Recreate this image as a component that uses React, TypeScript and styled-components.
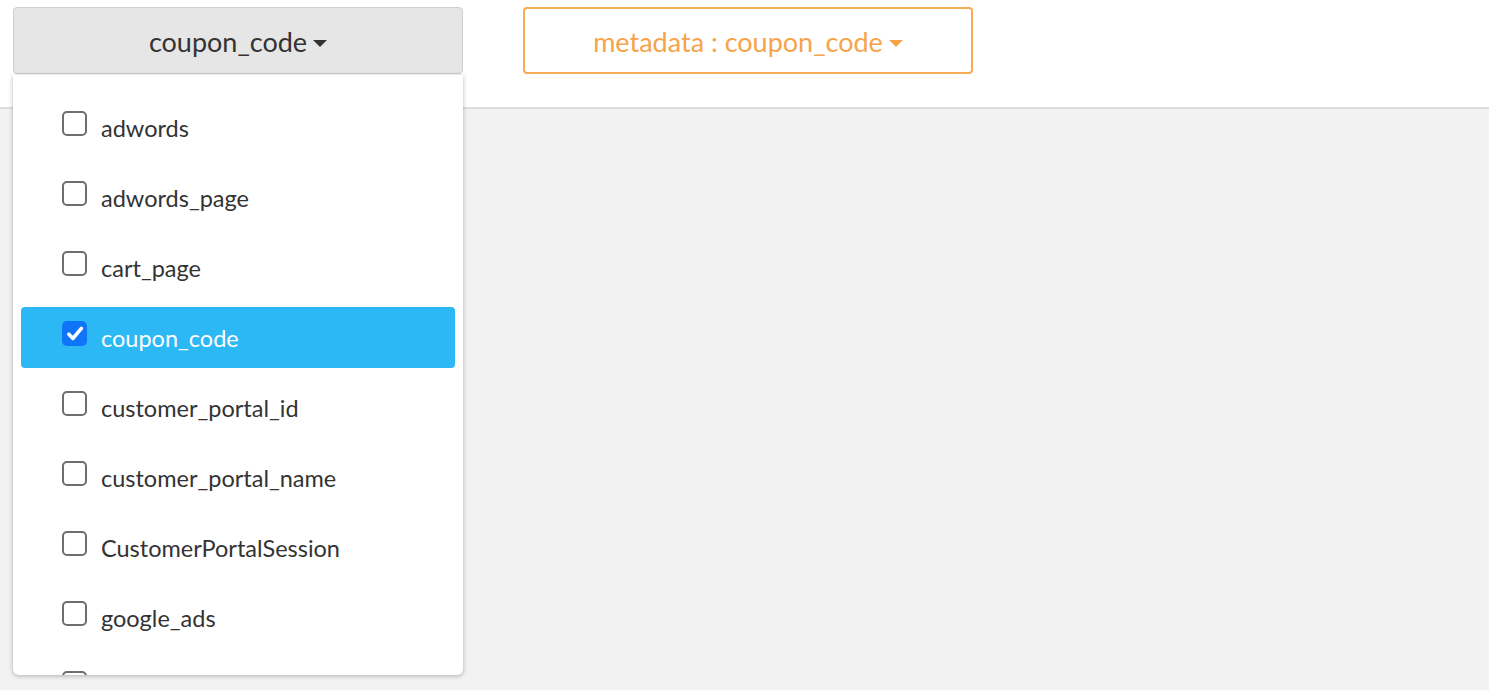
import React from "react";
import styled, { createGlobalStyle } from "styled-components";

const GlobalStyle = createGlobalStyle`
  html, body { margin: 0; padding: 0; background: #f2f2f2; }
  body { font-family: "Lato", "Noto Sans", sans-serif; }
  * { box-sizing: border-box; }
`;

const Page = styled.div`
  width: 1489px;
  height: 690px;
  background: #f2f2f2;
  overflow: hidden;
`;

const Header = styled.div`
  height: 109px;
  background: #ffffff;
  border-bottom: 2px solid #dddddd;
  padding: 7px 13px 0;
  display: flex;
  gap: 60px;
  align-items: flex-start;
`;

const DropdownWrap = styled.div`
  position: relative;
  width: 450px;
`;

const SelectButton = styled.button<{ $variant: "gray" | "orange" }>`
  width: 450px;
  height: 67px;
  border-radius: 4px;
  display: flex;
  align-items: center;
  justify-content: center;
  gap: 6px;
  font-family: "Lato", "Noto Sans", sans-serif;
  font-size: 27px;
  cursor: pointer;
  padding: 2px 0 0;
  background: ${(p) => (p.$variant === "gray" ? "#e6e6e6" : "#ffffff")};
  border: ${(p) => (p.$variant === "gray" ? "1px solid #cfcfcf" : "2px solid #f7ab55")};
  color: ${(p) => (p.$variant === "gray" ? "#333333" : "#f5a44b")};
`;

const Caret = styled.span`
  display: inline-block;
  width: 0;
  height: 0;
  border-left: 7px solid transparent;
  border-right: 7px solid transparent;
  border-top: 7px solid currentColor;
  margin-top: 3px;
`;

const Menu = styled.div`
  position: absolute;
  top: 68px;
  left: 0;
  width: 450px;
  height: 600px;
  background: #ffffff;
  border-radius: 0 0 6px 6px;
  box-shadow: 0 1px 5px rgba(0, 0, 0, 0.28);
  overflow: hidden;
  padding: 22px 8px 0;
  display: flex;
  flex-direction: column;
  gap: 9px;
  z-index: 2;
`;

const Row = styled.div<{ $selected?: boolean }>`
  flex: 0 0 61px;
  height: 61px;
  border-radius: 4px;
  display: flex;
  align-items: center;
  gap: 14px;
  padding-left: 41px;
  font-size: 23.5px;
  color: ${(p) => (p.$selected ? "#ffffff" : "#333333")};
  background: ${(p) => (p.$selected ? "#2cb7f5" : "transparent")};
`;

const Box = styled.span<{ $checked?: boolean }>`
  width: 25px;
  height: 25px;
  border-radius: 5px;
  margin-top: -8px;
  flex: 0 0 25px;
  display: flex;
  align-items: center;
  justify-content: center;
  background: ${(p) => (p.$checked ? "#0f74f7" : "#ffffff")};
  border: ${(p) => (p.$checked ? "none" : "2px solid #6e6e6e")};
`;

const Label = styled.span`
  line-height: 1;
  padding-top: 2px;
`;

const items = [
  "adwords",
  "adwords_page",
  "cart_page",
  "coupon_code",
  "customer_portal_id",
  "customer_portal_name",
  "CustomerPortalSession",
  "google_ads",
  "",
];

export default function App() {
  return (
    <Page>
      <GlobalStyle />
      <Header>
        <DropdownWrap>
          <SelectButton $variant="gray">
            coupon_code <Caret />
          </SelectButton>
          <Menu>
            {items.map((it, i) => {
              const sel = it === "coupon_code";
              return (
                <Row key={i} $selected={sel}>
                  <Box $checked={sel}>
                    {sel && (
                      <svg width="20" height="20" viewBox="0 0 20 20">
                        <path
                          d="M3.8 10.2 L8 14.4 L16.4 4.4"
                          fill="none"
                          stroke="#ffffff"
                          strokeWidth="3.6"
                          strokeLinecap="round"
                          strokeLinejoin="round"
                        />
                      </svg>
                    )}
                  </Box>
                  {it && <Label>{it}</Label>}
                </Row>
              );
            })}
          </Menu>
        </DropdownWrap>
        <SelectButton $variant="orange">
          metadata : coupon_code <Caret />
        </SelectButton>
      </Header>
    </Page>
  );
}
